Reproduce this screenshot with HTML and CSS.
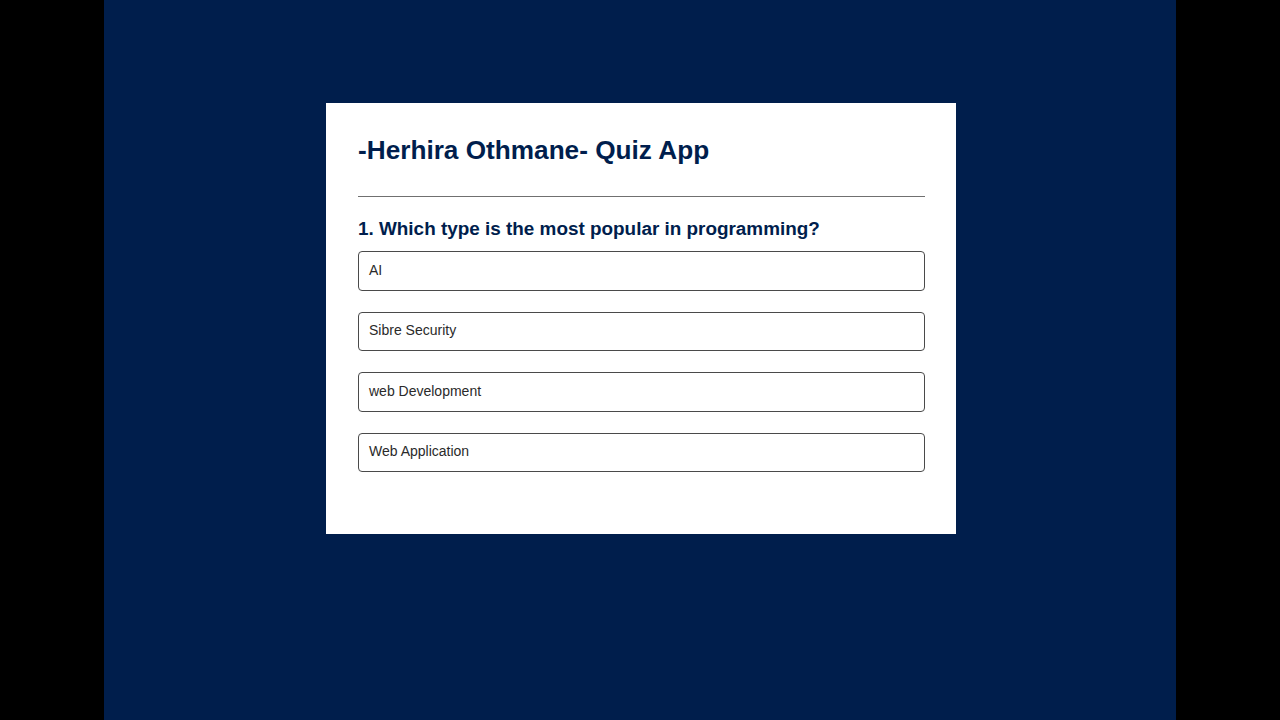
FILE: index.html
```html
<!DOCTYPE html>
<html lang="en">
<head>
<meta charset="utf-8">
<title>Quiz App</title>
<link rel="stylesheet" href="styles.css">
</head>
<body>
  <main class="stage">
    <section class="quiz">
      <h1 class="quiz-title">-Herhira Othmane- Quiz App</h1>
      <hr class="divider">
      <h2 class="question">1. Which type is the most popular in programming?</h2>
      <ul class="answers">
        <li class="answer">AI</li>
        <li class="answer">Sibre Security</li>
        <li class="answer">web Development</li>
        <li class="answer">Web Application</li>
      </ul>
    </section>
  </main>
</body>
</html>
```

FILE: styles.css
```css
* {
  box-sizing: border-box;
}

html, body {
  margin: 0;
  height: 100%;
}

body {
  background: #000;
  font-family: "Liberation Sans", Arial, sans-serif;
  display: flex;
  justify-content: center;
}

.stage {
  width: 1072px;
  height: 720px;
  background: #001e4c;
  padding: 103px 0 0 2px;
  display: flex;
  justify-content: center;
  align-items: flex-start;
}

.quiz {
  width: 630px;
  height: 431px;
  background: #fff;
  padding: 32px 31px 32px 32px;
}

.quiz-title {
  margin: 0;
  font-size: 26.2px;
  line-height: 30px;
  font-weight: bold;
  color: #001e4d;
}

.divider {
  margin: 31px 0 0;
  border: 0;
  border-top: 1px solid #707070;
}

.question {
  margin: 20px 0 0;
  font-size: 18.9px;
  line-height: 24px;
  font-weight: bold;
  color: #001e4d;
}

.answers {
  list-style: none;
  margin: 10px 0 0;
  padding: 0;
  display: flex;
  flex-direction: column;
  gap: 21px;
}

.answer {
  height: 39.5px;
  border: 1px solid #4a4a4a;
  border-radius: 4px;
  padding: 0 10px 2px;
  display: flex;
  align-items: center;
  font-size: 14px;
  color: #2a2a2a;
}
```
